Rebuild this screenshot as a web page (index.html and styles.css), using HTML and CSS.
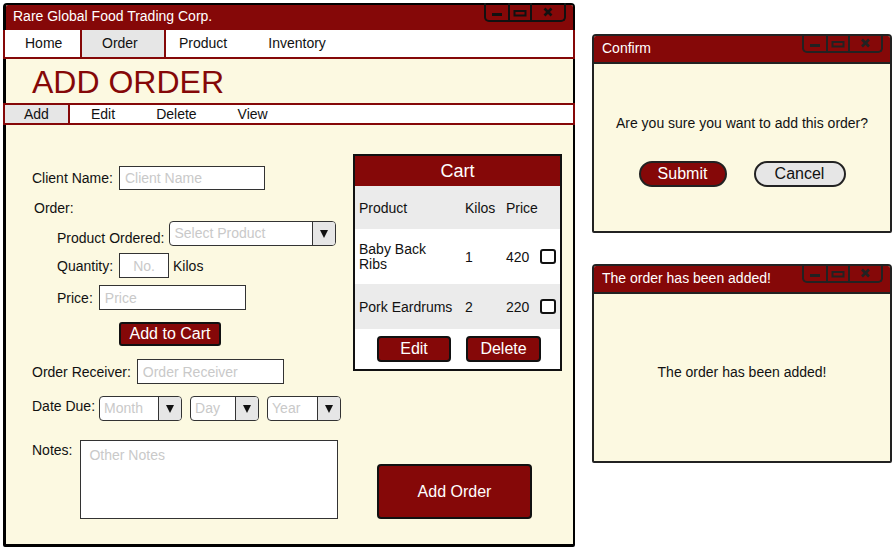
FILE: index.html
```html
<!DOCTYPE html>
<html lang="en">
<head>
  <meta charset="UTF-8" />
  <meta name="viewport" content="width=device-width, initial-scale=1.0" />
  <title>Add Order</title>
  <link rel="stylesheet" href="styles.css">
</head>
<body>
  <div class="desktop">
    <div class="window main-window">
      <div class="titlebar">
        <span class="title">Rare Global Food Trading Corp.</span>
        <div class="controls">
          <span class="ctl ctl-min"><svg width="22" height="17" viewBox="0 0 22 17"><rect x="6" y="10" width="10" height="3" fill="#111"/></svg></span>
          <span class="ctl ctl-max"><svg width="20" height="17" viewBox="0 0 20 17"><rect x="4.5" y="8" width="11" height="4.5" fill="none" stroke="#111" stroke-width="2"/></svg></span>
          <span class="ctl ctl-close"><svg width="32" height="17" viewBox="0 0 32 17"><path d="M12.5 5.5 L19.5 12.5 M19.5 5.5 L12.5 12.5" stroke="#111" stroke-width="2.6"/></svg></span>
        </div>
      </div>

      <nav class="tabs">
        <a class="tab tab-home">Home</a>
        <a class="tab tab-active">Order</a>
        <a class="tab tab-plain">Product</a>
        <a class="tab tab-plain">Inventory</a>
      </nav>

      <h1 class="page-title">ADD ORDER</h1>

      <nav class="subtabs">
        <a class="subtab subtab-active">Add</a>
        <a class="subtab subtab-plain">Edit</a>
        <a class="subtab subtab-plain">Delete</a>
        <a class="subtab subtab-plain">View</a>
      </nav>

      <div class="content">
        <form class="order-form">
          <div class="field">
            <label>Client Name:</label>
            <input class="text-input w146" type="text" placeholder="Client Name" />
          </div>

          <div class="group-label">Order:</div>

          <div class="field sub field-product">
            <label class="label-low">Product Ordered:</label>
            <div class="select w167"><span class="select-text">Select Product</span><span class="select-arrow"></span></div>
          </div>
          <div class="field sub field-qty">
            <label>Quantity:</label>
            <input class="text-input w50 center" type="text" placeholder="No." />
            <span class="unit">Kilos</span>
          </div>
          <div class="field sub field-price">
            <label>Price:</label>
            <input class="text-input w147" type="text" placeholder="Price" />
          </div>

          <button type="button" class="btn btn-cart">Add to Cart</button>

          <div class="field field-receiver">
            <label>Order Receiver:</label>
            <input class="text-input w147" type="text" placeholder="Order Receiver" />
          </div>

          <div class="field field-date">
            <label>Date Due:</label>
            <div class="select w83"><span class="select-text">Month</span><span class="select-arrow"></span></div>
            <div class="select w69"><span class="select-text">Day</span><span class="select-arrow"></span></div>
            <div class="select w74"><span class="select-text">Year</span><span class="select-arrow"></span></div>
          </div>

          <div class="field field-notes">
            <label>Notes:</label>
            <textarea class="notes" placeholder="Other Notes"></textarea>
          </div>
        </form>

        <div class="side">
          <div class="cart">
            <div class="cart-title">Cart</div>
            <div class="cart-row cart-head">
              <span>Product</span><span>Kilos</span><span>Price</span><span></span>
            </div>
            <div class="cart-row cart-item">
              <span class="item-name">Baby Back<br>Ribs</span><span>1</span><span>420</span><span class="check"></span>
            </div>
            <div class="cart-row cart-item cart-alt">
              <span>Pork Eardrums</span><span>2</span><span>220</span><span class="check"></span>
            </div>
            <div class="cart-actions">
              <button type="button" class="btn btn-edit">Edit</button>
              <button type="button" class="btn btn-delete">Delete</button>
            </div>
          </div>
          <button type="button" class="btn btn-add-order">Add Order</button>
        </div>
      </div>
    </div>

    <div class="dialogs">
      <div class="window dialog">
        <div class="titlebar dialog-bar">
          <span class="title">Confirm</span>
          <div class="controls">
            <span class="ctl ctl-min"><svg width="22" height="17" viewBox="0 0 22 17"><rect x="6" y="10" width="10" height="3" fill="#222"/></svg></span>
            <span class="ctl ctl-max"><svg width="20" height="17" viewBox="0 0 20 17"><rect x="4.5" y="8" width="11" height="4.5" fill="none" stroke="#222" stroke-width="2"/></svg></span>
            <span class="ctl ctl-close"><svg width="31" height="17" viewBox="0 0 31 17"><path d="M12 5.5 L19 12.5 M19 5.5 L12 12.5" stroke="#222" stroke-width="2.6"/></svg></span>
          </div>
        </div>
        <div class="dialog-body confirm-body">
          <p class="dialog-text">Are you sure you want to add this order?</p>
          <div class="dialog-buttons">
            <button type="button" class="pill pill-submit">Submit</button>
            <button type="button" class="pill pill-cancel">Cancel</button>
          </div>
        </div>
      </div>

      <div class="window dialog">
        <div class="titlebar dialog-bar">
          <span class="title">The order has been added!</span>
          <div class="controls">
            <span class="ctl ctl-min"><svg width="22" height="17" viewBox="0 0 22 17"><rect x="6" y="10" width="10" height="3" fill="#222"/></svg></span>
            <span class="ctl ctl-max"><svg width="20" height="17" viewBox="0 0 20 17"><rect x="4.5" y="8" width="11" height="4.5" fill="none" stroke="#222" stroke-width="2"/></svg></span>
            <span class="ctl ctl-close"><svg width="31" height="17" viewBox="0 0 31 17"><path d="M12 5.5 L19 12.5 M19 5.5 L12 12.5" stroke="#222" stroke-width="2.6"/></svg></span>
          </div>
        </div>
        <div class="dialog-body notice-body">
          <p class="dialog-text">The order has been added!</p>
        </div>
      </div>
    </div>
  </div>
</body>
</html>
```

FILE: styles.css
```css
* { box-sizing: border-box; }
body { margin: 0; background: #fff; font-family: "Liberation Sans", Arial, sans-serif; font-size: 14px; color: #111; }
.desktop { display: flex; align-items: flex-start; padding: 3px 0 0 3px; }

/* windows */
.window { background: #fcf9e1; border: 2px solid #000; border-radius: 4px 4px 2px 2px; display: flex; flex-direction: column; }
.main-window { width: 572px; height: 544px; border-width: 2px 2px 3px 3px; }
.titlebar { display: flex; justify-content: space-between; align-items: flex-start; height: 25px; background: #850808; border-radius: 2px 2px 0 0; }
.title { color: #fff; line-height: 22px; padding-left: 8px; }
.main-window .title { padding-left: 7px; }
.controls { display: flex; height: 19px; margin: -2px 7px 0 0; border: 2px solid #111; border-top: 0; border-radius: 0 0 5px 5px; }
.ctl { display: flex; height: 17px; }
.ctl + .ctl { border-left: 2px solid #111; }
.ctl-min { width: 22px; }
.ctl-max { width: 22px; }
.ctl-close { width: 34px; }

/* main tabs */
.tabs { display: flex; height: 29px; margin: 0 -2px 0 -3px; background: #fff; border: 2px solid #850808; border-top: 0; }
.tab { display: block; line-height: 27px; color: #111; }
.tab-home { width: 75px; padding-left: 20px; }
.tab-active { width: 86px; padding-left: 20px; background: #e6e6e6; border-left: 2px solid #850808; border-right: 2px solid #850808; }
.tab-plain { margin-left: 41px; }
.tab-active + .tab-plain { margin-left: 13px; }

.page-title { margin: 0; height: 44px; padding: 2px 0 0 26px; font-size: 32px; line-height: 42px; font-weight: normal; color: #850808; }

.subtabs { display: flex; height: 22px; margin: 0 -2px 0 -3px; background: #fff; border: 2px solid #850808; }
.subtab { display: block; line-height: 18px; color: #111; }
.subtab-active { width: 65px; padding-left: 19px; background: #e6e6e6; border-right: 2px solid #850808; }
.subtab-plain { margin-left: 41px; }
.subtab-active + .subtab-plain { margin-left: 21px; }

/* form */
.content { display: flex; flex: 1; }
.order-form { width: 347px; padding: 41px 0 0 26px; }
.field { display: flex; align-items: center; gap: 6px; }
.field label { line-height: 16px; }
.sub { padding-left: 25px; }
.group-label { margin-top: 10px; padding-left: 2px; line-height: 16px; }
.field-product { margin-top: 5px; gap: 5px; }
.label-low { padding-top: 8px; }
.field-qty, .field-price { margin-top: 7px; }
.field-qty .unit { margin-left: -2px; }
.field-receiver { margin-top: 13px; }
.field-date { margin-top: 12px; gap: 8px; align-items: flex-start; }
.field-date label { padding-top: 2px; margin-right: -4px; }
.field-notes { margin-top: 19px; align-items: flex-start; gap: 8px; }
.field-notes label { padding-top: 2px; }

.text-input { height: 25px; padding: 0 5px; border: 1px solid #333; background: #fff; font: 14px "Liberation Sans", Arial, sans-serif; color: #111; }
.text-input::placeholder, .notes::placeholder { color: #c9c9c9; }
.field:first-child .text-input { height: 24px; }
.center { text-align: center; }
.w50 { width: 50px; }
.w146 { width: 146px; }
.w147 { width: 147px; }
.w167 { width: 167px; }
.w83 { width: 83px; }
.w69 { width: 69px; }
.w74 { width: 74px; }

.select { display: flex; height: 25px; border: 1px solid #333; border-radius: 4px; background: #fff; overflow: hidden; }
.select-text { flex: 1; padding-left: 4px; line-height: 22px; color: #c9c9c9; }
.select-arrow { width: 23px; display: flex; align-items: center; justify-content: center; background: #e6e6e6; border-left: 1px solid #333; }
.select-arrow::after { content: ""; border-left: 4.5px solid transparent; border-right: 4.5px solid transparent; border-top: 8px solid #111; }

.notes { width: 258px; height: 79px; padding: 6px 8px; border: 1px solid #333; background: #fff; resize: none; font: 14px/16px "Liberation Sans", Arial, sans-serif; }

/* buttons */
.btn { padding: 0; background: #850808; color: #fff; border: 2px solid #111; border-radius: 4px; font: 16px "Liberation Sans", Arial, sans-serif; }
.btn-cart { display: block; width: 102px; height: 24px; margin: 12px 0 0 87px; border-radius: 3px; line-height: 18px; }

/* cart */
.side { padding-top: 29px; }
.cart { width: 209px; height: 217px; border: 2px solid #111; background: #fff; }
.cart-title { height: 30px; line-height: 30px; text-align: center; background: #850808; color: #fff; font-size: 18px; }
.cart-row { display: grid; grid-template-columns: 110px 41px 34px 20px; align-items: center; }
.cart-row span:first-child { padding-left: 4px; }
.cart-head { height: 43px; background: #ebebeb; }
.cart-item { height: 55px; }
.cart-alt { height: 45px; background: #ebebeb; }
.item-name { line-height: 15px; }
.check { width: 16px; height: 15px; border: 2px solid #111; border-radius: 3px; background: #fff; }
.cart-actions { display: flex; align-items: center; gap: 15px; height: 40px; padding-left: 22px; }
.btn-edit { width: 74px; height: 26px; }
.btn-delete { width: 75px; height: 26px; }
.btn-add-order { display: block; width: 155px; height: 55px; margin: 93px 0 0 24px; }

/* dialogs */
.dialogs { display: flex; flex-direction: column; gap: 31px; margin: 31px 0 0 17px; }
.dialog { width: 300px; height: 199px; border-color: #222; }
.dialog-bar { height: 28px; border-bottom: 2px solid #222; }
.dialog-bar .title { line-height: 24px; }
.dialog-bar .controls, .dialog-bar .ctl + .ctl { border-color: #222; }
.dialog-bar .ctl-close { width: 33px; }
.dialog-body { flex: 1; text-align: center; }
.dialog-text { margin: 0; line-height: 16px; }
.confirm-body { padding-top: 51px; }
.notice-body { padding-top: 70px; }
.dialog-buttons { display: flex; justify-content: center; gap: 27px; margin-top: 30px; }
.pill { height: 26px; padding: 0; border: 2px solid #222; border-radius: 13px; font: 16px "Liberation Sans", Arial, sans-serif; }
.pill-submit { width: 88px; background: #850808; color: #fff; }
.pill-cancel { width: 92px; background: #e6e6e6; color: #111; }
```
